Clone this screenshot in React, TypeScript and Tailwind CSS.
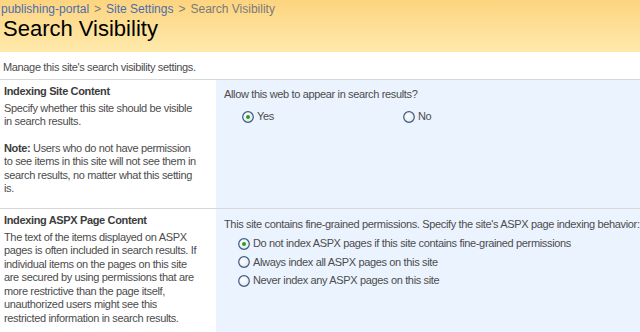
import React from 'react';

const font = { fontFamily: 'Tahoma, "Liberation Sans", Arial, sans-serif' };

const Radio = ({ checked }: { checked?: boolean }) => (
  <svg width="12" height="12" viewBox="0 0 12 12" className="shrink-0">
    <defs>
      <radialGradient id="rg" cx="0.4" cy="0.4" r="0.7">
        <stop offset="0" stopColor="#ffffff" />
        <stop offset="1" stopColor="#dfe6ee" />
      </radialGradient>
    </defs>
    <circle cx="6" cy="6" r="5.3" fill="url(#rg)" stroke="#3d5a80" strokeWidth="1.2" />
    {checked && <circle cx="6" cy="6" r="2" fill="#21a121" />}
  </svg>
);

const Option = ({ label, checked }: { label: string; checked?: boolean }) => (
  <label className="flex items-center gap-[3px] h-[18.5px]">
    <Radio checked={checked} />
    <span>{label}</span>
  </label>
);

export default function App() {
  return (
    <div className="w-[640px] h-[332px] overflow-hidden bg-white text-[11px] tracking-[-0.35px] text-[#4c4c4c] leading-[13.5px]" style={font}>
      <div className="h-[52px] bg-gradient-to-b from-[#fdd47f] to-[#fee9ab] pl-[1px] pt-[2px] tracking-normal">
        <div className="text-[12px] leading-[14px] text-[#7a7a7a]">
          <span className="text-[#4d6dab]">publishing-portal</span>
          <span className="mx-[5px]">&gt;</span>
          <span className="text-[#4d6dab]">Site Settings</span>
          <span className="mx-[5px]">&gt;</span>
          <span>Search Visibility</span>
        </div>
        <h1 className="pl-[2px] text-[22px] leading-[25px] text-black">Search Visibility</h1>
      </div>

      <div className="px-[3px] pt-[9px] h-[28px] border-b border-[#d8d8d8]">Manage this site's search visibility settings.</div>

      <div className="flex h-[129px] border-b border-[#d8d8d8]">
        <div className="w-[216px] shrink-0 pl-[4px] pr-[12px] pt-[5px]">
          <div className="font-bold text-[#3c3c3c] mb-[3px]">Indexing Site Content</div>
          <p>Specify whether this site should be visible<br />in search results.</p>
          <p className="mt-[13px]"><b className="text-[#3c3c3c]">Note:</b> Users who do not have permission<br />to see items in this site will not see them in search results, no matter what this setting is.</p>
        </div>
        <div className="flex-1 bg-[#ebf3ff] pl-[8px] pt-[8px]">
          <div>Allow this web to appear in search results?</div>
          <div className="flex mt-[6px] pl-[18px]">
            <div className="w-[161px]"><Option label="Yes" checked /></div>
            <Option label="No" />
          </div>
        </div>
      </div>

      <div className="flex h-[123px]">
        <div className="w-[216px] shrink-0 pl-[4px] pr-[12px] pt-[5px]">
          <div className="font-bold text-[#3c3c3c] mb-[3px]">Indexing ASPX Page Content</div>
          <p>The text of the items displayed on ASPX pages is often included in search results. If individual items on the pages on this site are secured by using permissions that are more restrictive than the page itself,<br />unauthorized users might see this<br />restricted information in search results.</p>
        </div>
        <div className="flex-1 bg-[#ebf3ff] pl-[8px] pt-[9px]">
          <div className="whitespace-nowrap">This site contains fine-grained permissions. Specify the site's ASPX page indexing behavior:</div>
          <div className="mt-[3px] pl-[14px]">
            <Option label="Do not index ASPX pages if this site contains fine-grained permissions" checked />
            <Option label="Always index all ASPX pages on this site" />
            <Option label="Never index any ASPX pages on this site" />
          </div>
        </div>
      </div>
    </div>
  );
}
